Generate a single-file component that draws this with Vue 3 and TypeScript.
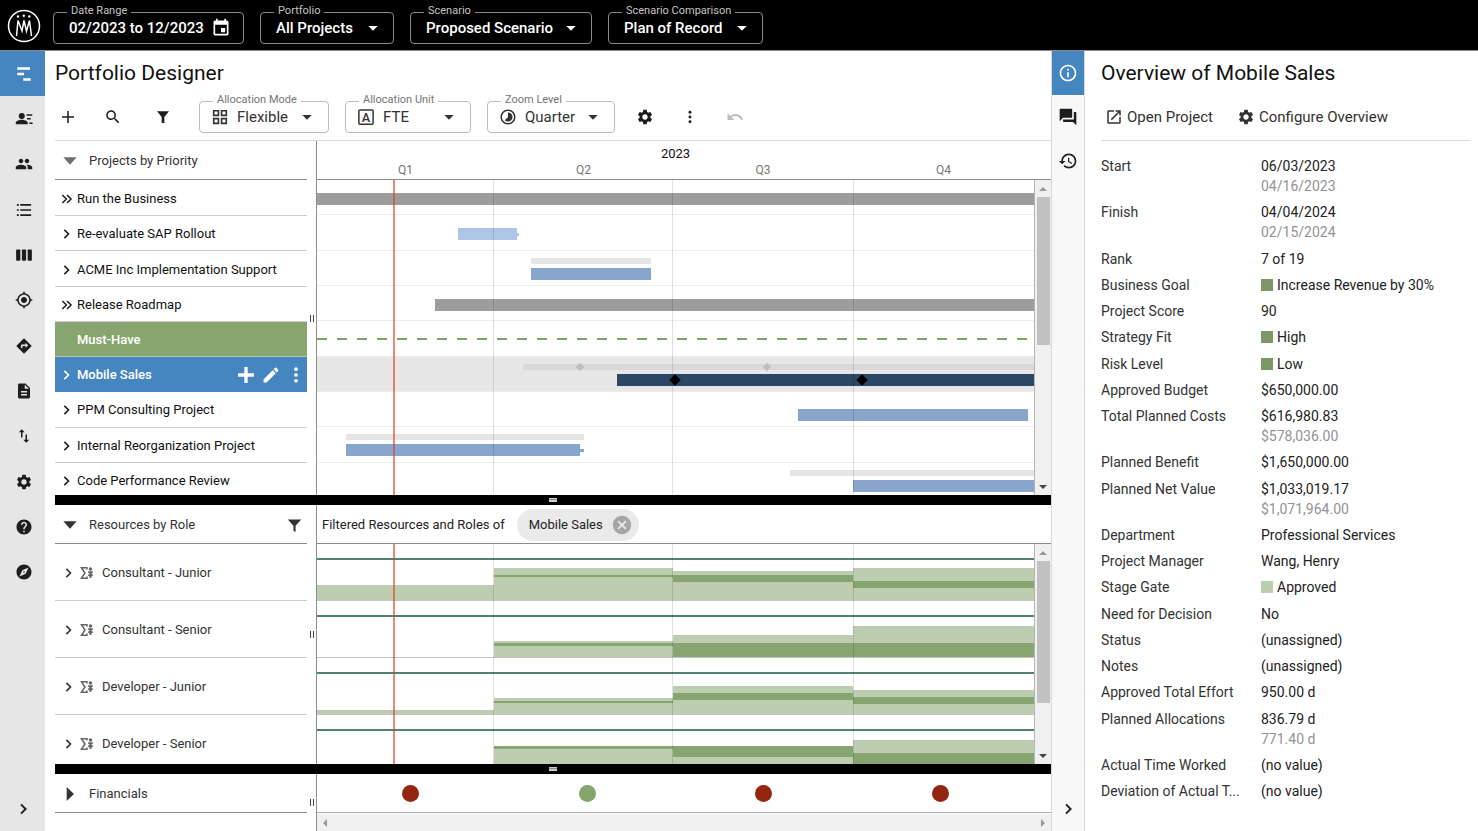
<script setup lang="ts">
import { h, ref, type FunctionalComponent } from 'vue'

const icons: Record<string, string> = {
  roadmap: '<path d="M3 3h17v3.200H3zM3 10.400h9v3.200H3zM11 17.800h10V21H11z"/>',
  person: '<circle cx="9" cy="8" r="4"/><path d="M1 19v-2c0-2.700 5.300-4 8-4s8 1.300 8 4v2zM15.500 5.500H23v2h-7.500zM16 10.500h5v2h-5zM19 16.500h4.500v2H19z"/>',
  people: '<path d="M16 11c1.660 0 2.990-1.340 2.990-3S17.660 5 16 5c-1.660 0-3 1.340-3 3s1.340 3 3 3zm-8 0c1.660 0 2.990-1.340 2.990-3S9.660 5 8 5C6.340 5 5 6.340 5 8s1.340 3 3 3zm0 2c-2.330 0-7 1.170-7 3.500V19h14v-2.500c0-2.330-4.670-3.500-7-3.500zm8 0c-.290 0-.620.020-.970.050 1.160.840 1.970 1.970 1.970 3.450V19h6v-2.500c0-2.330-4.670-3.500-7-3.500z"/>',
  list: '<path d="M2.500 4h2.600v2.200H2.500zM2.500 10.900h2.600v2.200H2.500zM2.500 17.800h2.600V20H2.500zM7 4h14.500v2.200H7zM7 10.900h14.500v2.200H7zM7 17.800h14.500V20H7z"/>',
  columns: '<rect x="1.500" y="4.500" width="5.600" height="15" rx="1.200"/><rect x="9.200" y="4.500" width="5.600" height="15" rx="1.200"/><rect x="16.900" y="4.500" width="5.600" height="15" rx="1.200"/>',
  target: '<path d="M12 8c-2.210 0-4 1.790-4 4s1.790 4 4 4 4-1.790 4-4-1.790-4-4-4zm8.940 3c-.460-4.170-3.770-7.480-7.940-7.940V1h-2v2.060C6.830 3.520 3.520 6.830 3.060 11H1v2h2.060c.460 4.170 3.770 7.480 7.940 7.940V23h2v-2.060c4.170-.460 7.480-3.770 7.940-7.940H23v-2h-2.060zM12 19c-3.870 0-7-3.130-7-7s3.130-7 7-7 7 3.130 7 7-3.130 7-7 7z"/>',
  directions: '<path d="M21.710 11.290l-9-9c-.390-.390-1.020-.390-1.410 0l-9 9c-.390.390-.390 1.020 0 1.410l9 9c.390.390 1.020.390 1.410 0l9-9c.390-.380.390-1.010 0-1.410zM14 14.500V12h-4v3H8v-4c0-.550.450-1 1-1h5V7.500l3.500 3.500-3.500 3.500z"/>',
  document: '<path d="M14 2H6c-1.100 0-1.990.900-1.990 2L4 20c0 1.100.890 2 1.990 2H18c1.100 0 2-.900 2-2V8l-6-6zm2 16H8v-2h8v2zm0-4H8v-2h8v2zm-3-5V3.500L18.500 9H13z"/>',
  swap: '<path d="M16 17.010V10h-2v7.010h-3L15 21l4-3.990h-3zM9 3L5 6.990h3V14h2V6.990h3L9 3z"/>',
  settings: '<path d="M19.140 12.940c.040-.300.060-.610.060-.940 0-.320-.020-.640-.070-.940l2.030-1.580c.180-.140.230-.410.120-.610l-1.920-3.320c-.120-.220-.370-.290-.590-.220l-2.390.960c-.500-.380-1.030-.700-1.620-.940l-.360-2.540c-.040-.240-.240-.410-.480-.410h-3.840c-.240 0-.430.170-.470.410l-.360 2.540c-.590.240-1.130.570-1.620.940l-2.390-.960c-.220-.080-.470 0-.590.220L2.740 8.870c-.120.210-.080.470.120.610l2.030 1.580c-.050.300-.090.630-.090.940s.020.640.070.940l-2.030 1.580c-.180.140-.230.410-.120.610l1.920 3.320c.120.220.370.290.590.220l2.390-.960c.500.380 1.030.700 1.620.940l.360 2.540c.050.240.240.410.480.410h3.840c.240 0 .440-.170.470-.410l.360-2.540c.590-.240 1.130-.560 1.620-.940l2.390.960c.220.080.470 0 .590-.220l1.920-3.320c.120-.220.070-.470-.120-.610l-2.010-1.580zM12 15.600c-1.980 0-3.600-1.620-3.600-3.600s1.620-3.600 3.600-3.600 3.600 1.620 3.600 3.600-1.620 3.600-3.600 3.600z"/>',
  help: '<path d="M12 2C6.480 2 2 6.480 2 12s4.480 10 10 10 10-4.480 10-10S17.520 2 12 2zm1 17h-2v-2h2v2zm2.070-7.750l-.900.920C13.450 12.900 13 13.500 13 15h-2v-.500c0-1.100.450-2.100 1.170-2.830l1.240-1.260c.370-.360.590-.860.590-1.410 0-1.100-.900-2-2-2s-2 .900-2 2H8c0-2.210 1.790-4 4-4s4 1.790 4 4c0 .880-.360 1.680-.930 2.250z"/>',
  explore: '<path d="M12 10.900c-.610 0-1.100.490-1.100 1.100s.490 1.100 1.100 1.100 1.100-.490 1.100-1.100-.490-1.100-1.100-1.100zM12 2C6.480 2 2 6.480 2 12s4.480 10 10 10 10-4.480 10-10S17.520 2 12 2zm2.190 12.190L6 18l3.810-8.190L18 6l-3.810 8.190z"/>',
  chevron: '<path d="M7.500 5L14.500 12l-7 7" fill="none" stroke="currentColor" stroke-width="2.800"/>',
  chevrons: '<path d="M4 5l7 7-7 7M12 5l7 7-7 7" fill="none" stroke="currentColor" stroke-width="2.500"/>',
  caret: '<path d="M5 9h14l-7 7z"/>',
  calendar: '<path d="M17 12h-5v5h5v-5zM16 1v2H8V1H6v2H5c-1.110 0-1.990.900-1.990 2L3 19c0 1.100.890 2 2 2h14c1.100 0 2-.900 2-2V5c0-1.100-.900-2-2-2h-1V1h-2zm3 18H5V8h14v11z"/>',
  plus: '<path d="M20 13h-7v7h-2v-7H4v-2h7V4h2v7h7z"/>',
  plusBold: '<path d="M21.500 14H14v7.500h-4V14H2.500v-4H10V2.500h4V10h7.500z"/>',
  search: '<path d="M15.500 14h-.790l-.280-.270C15.410 12.590 16 11.110 16 9.500 16 5.910 13.090 3 9.500 3S3 5.910 3 9.500 5.910 16 9.500 16c1.610 0 3.090-.590 4.230-1.570l.270.280v.790l5 4.990L20.490 19l-4.990-5zm-6 0C7.010 14 5 11.990 5 9.500S7.010 5 9.500 5 14 7.010 14 9.500 11.990 14 9.500 14z"/>',
  filter: '<path d="M3 3.500h18L14 12v9h-4v-9z"/>',
  filterThin: '<path d="M2.500 3.500h19L13.500 12.500V21l-3-1.500v-7z"/>',
  tiles: '<path d="M2.500 2.500h8.500V11H2.500zm2.200 2.200v4.100h4.100V4.700zM13 2.500h8.500V11H13zm2.200 2.200v4.100h4.100V4.700zM2.500 13h8.500v8.500H2.500zm2.200 2.200v4.100h4.100v-4.100zM13 13h8.500v8.500H13zm2.200 2.200v4.100h4.100v-4.100z" fill-rule="evenodd"/>',
  letter: '<rect x="2.500" y="2.500" width="19" height="19" rx="1.500" fill="none" stroke="currentColor" stroke-width="2"/><text x="12" y="18" text-anchor="middle" font-size="17" font-weight="500">A</text>',
  timelapse: '<path d="M16.240 7.760C15.070 6.590 13.540 6 12 6v6l-4.240 4.240c2.340 2.340 6.140 2.340 8.490 0 2.340-2.340 2.340-6.140-.010-8.480zM12 2C6.480 2 2 6.480 2 12s4.480 10 10 10 10-4.480 10-10S17.520 2 12 2zm0 18c-4.420 0-8-3.580-8-8s3.580-8 8-8 8 3.580 8 8-3.580 8-8 8z"/>',
  more: '<circle cx="12" cy="5" r="2.200"/><circle cx="12" cy="12" r="2.200"/><circle cx="12" cy="19" r="2.200"/>',
  undo: '<path d="M12.500 8c-2.650 0-5.050.990-6.900 2.600L2 7v9h9l-3.620-3.620c1.390-1.160 3.160-1.880 5.120-1.880 3.540 0 6.550 2.310 7.600 5.500l2.370-.780C21.080 11.030 17.150 8 12.500 8z"/>',
  edit: '<path d="M3 17.250V21h3.750L17.810 9.940l-3.750-3.750L3 17.250zM20.710 7.040c.390-.390.390-1.020 0-1.410l-2.340-2.340c-.390-.390-1.020-.390-1.410 0l-1.830 1.830 3.750 3.750 1.830-1.830z"/>',
  triangle: '<path d="M2 6.500h20L12 17.500z"/>',
  triangleRight: '<path d="M7 1.500L18 12 7 22.500z"/>',
  role: '<path d="M12 6V3H2.500l6 9-6 9H12v-3" fill="none" stroke="currentColor" stroke-width="2.600"/><circle cx="18" cy="5" r="3"/><path d="M14 9h8v3h-2v2h2v3h-2v3h-4v-3h-2v-3h2v-2h-2z"/>',
  cancel: '<path d="M12 2C6.470 2 2 6.470 2 12s4.470 10 10 10 10-4.470 10-10S17.530 2 12 2zm5 13.590L15.590 17 12 13.410 8.410 17 7 15.590 10.590 12 7 8.410 8.410 7 12 10.590 15.590 7 17 8.410 13.410 12 17 15.590z"/>',
  info: '<path d="M11 7h2v2h-2zm0 4h2v6h-2zm1-9C6.480 2 2 6.480 2 12s4.480 10 10 10 10-4.480 10-10S17.520 2 12 2zm0 18c-4.410 0-8-3.590-8-8s3.590-8 8-8 8 3.590 8 8-3.590 8-8 8z"/>',
  chat: '<path d="M21 6h-2v9H6v2c0 .550.450 1 1 1h11l4 4V7c0-.550-.450-1-1-1zm-4 6V3c0-.550-.450-1-1-1H3c-.550 0-1 .450-1 1v14l4-4h10c.550 0 1-.450 1-1z"/>',
  history: '<path d="M13 3c-4.970 0-9 4.030-9 9H1l3.890 3.890.070.140L9 12H6c0-3.870 3.130-7 7-7s7 3.130 7 7-3.130 7-7 7c-1.930 0-3.680-.790-4.940-2.060l-1.420 1.420C8.270 19.990 10.510 21 13 21c4.970 0 9-4.030 9-9s-4.030-9-9-9zm-1 5v5l4.280 2.540.720-1.210-3.500-2.080V8H12z"/>',
  open: '<path d="M14 3v2h3.590l-9.830 9.830 1.410 1.410L19 6.410V10h2V3zm5 16H5V5h7V3H5c-1.110 0-2 .900-2 2v14a2 2 0 0 0 2 2h14a2 2 0 0 0 2-2v-7h-2v7z"/>',
}

const Icon: FunctionalComponent<{ name: string; size?: number }> = (p) =>
  h('svg', {
    viewBox: '0 0 24 24',
    width: p.size ?? 18,
    height: p.size ?? 18,
    fill: 'currentColor',
    'aria-hidden': 'true',
    innerHTML: icons[p.name],
  })
Icon.props = ['name', 'size']

const headerFields = [
  { id: 'portfolio', label: 'Portfolio', value: 'All Projects', cls: 'w-portfolio' },
  { id: 'scenario', label: 'Scenario', value: 'Proposed Scenario', cls: 'w-scenario' },
  { id: 'comparison', label: 'Scenario Comparison', value: 'Plan of Record', cls: 'w-comparison' },
]
const toolFields = [
  { id: 'mode', label: 'Allocation Mode', value: 'Flexible', icon: 'tiles', cls: 'w-mode' },
  { id: 'unit', label: 'Allocation Unit', value: 'FTE', icon: 'letter', cls: 'w-unit' },
  { id: 'zoom', label: 'Zoom Level', value: 'Quarter', icon: 'timelapse', cls: 'w-zoom' },
]
const nav = [
  ['roadmap', 'Portfolio Designer'], ['person', 'Resource details'], ['people', 'Teams'],
  ['list', 'List'], ['columns', 'Board'], ['target', 'Goals'], ['directions', 'Decisions'],
  ['document', 'Reports'], ['swap', 'Import and export'], ['settings', 'Settings'],
  ['help', 'Help'], ['explore', 'Explore'],
]

/* Timeline positions are expressed in units of the visible span. */
const SPAN = 717
const pct = (v: number) => `${(v / SPAN) * 100}%`
const span = (r: number[]) => ({ marginLeft: pct(r[0]), width: pct(r[1] - r[0]) })
const at = (v: number) => ({ left: pct(v) })
const quarterStarts = [176, 355, 536]
const today = 76

interface Row {
  name: string
  kind: 'group' | 'project' | 'divider' | 'selected'
  tone?: string
  bar?: number[]
  tail?: number
  base?: number[]
  single?: boolean
  marks?: number[]
  baseMarks?: number[]
}
const projects: Row[] = [
  { name: 'Run the Business', kind: 'group', tone: 'gray', bar: [0, 717], single: true },
  { name: 'Re-evaluate SAP Rollout', kind: 'project', tone: 'light', bar: [141, 200], tail: 2, single: true },
  { name: 'ACME Inc Implementation Support', kind: 'project', tone: 'blue', bar: [214, 334], base: [214, 334] },
  { name: 'Release Roadmap', kind: 'group', tone: 'gray', bar: [118, 717], single: true },
  { name: 'Must-Have', kind: 'divider' },
  { name: 'Mobile Sales', kind: 'selected', tone: 'navy', bar: [300, 717], base: [206, 717], marks: [357, 544], baseMarks: [263, 450] },
  { name: 'PPM Consulting Project', kind: 'project', tone: 'blue', bar: [481, 711] },
  { name: 'Internal Reorganization Project', kind: 'project', tone: 'blue', bar: [29, 263], tail: 4, base: [29, 267] },
  { name: 'Code Performance Review', kind: 'project', tone: 'blue', bar: [536, 717], base: [473, 717] },
]

/* Each quarter stacks free (top), allocated (middle) and used (bottom) heights. */
const roles = [
  { name: 'Consultant - Junior', load: [[0, 0, 15], [7, 2, 23], [4, 7, 18], [13, 7, 12]] },
  { name: 'Consultant - Senior', load: [[0, 0, 0], [2, 3, 11], [8, 14, 0], [17, 14, 0]] },
  { name: 'Developer - Junior', load: [[0, 0, 4], [3, 2, 11], [7, 7, 14], [7, 7, 10]] },
  { name: 'Developer - Senior', load: [[0, 0, 0], [0, 3, 22], [0, 11, 14], [13, 18, 0]] },
]
const px = (v: number) => ({ height: `${v}px` })
const finance = ['red', 'green', 'red', 'red']

const facts: { k: string; v: string; old?: string; chip?: string }[] = [
  { k: 'Start', v: '06/03/2023', old: '04/16/2023' },
  { k: 'Finish', v: '04/04/2024', old: '02/15/2024' },
  { k: 'Rank', v: '7 of 19' },
  { k: 'Business Goal', v: 'Increase Revenue by 30%', chip: 'dark' },
  { k: 'Project Score', v: '90' },
  { k: 'Strategy Fit', v: 'High', chip: 'dark' },
  { k: 'Risk Level', v: 'Low', chip: 'dark' },
  { k: 'Approved Budget', v: '$650,000.00' },
  { k: 'Total Planned Costs', v: '$616,980.83', old: '$578,036.00' },
  { k: 'Planned Benefit', v: '$1,650,000.00' },
  { k: 'Planned Net Value', v: '$1,033,019.17', old: '$1,071,964.00' },
  { k: 'Department', v: 'Professional Services' },
  { k: 'Project Manager', v: 'Wang, Henry' },
  { k: 'Stage Gate', v: 'Approved', chip: 'soft' },
  { k: 'Need for Decision', v: 'No' },
  { k: 'Status', v: '(unassigned)' },
  { k: 'Notes', v: '(unassigned)' },
  { k: 'Approved Total Effort', v: '950.00 d' },
  { k: 'Planned Allocations', v: '836.79 d', old: '771.40 d' },
  { k: 'Actual Time Worked', v: '(no value)' },
  { k: 'Deviation of Actual T...', v: '(no value)' },
]
const chosen = ref<Record<string, string>>(
  Object.fromEntries([...headerFields, ...toolFields].map((f) => [f.id, f.value])),
)
</script>

<template>
  <div class="app">
    <header class="topbar">
      <svg class="logo" viewBox="0 0 34 34" width="34" height="34" fill="none" stroke="#fff" aria-label="Meisterplan">
        <circle cx="17" cy="17" r="15.500" stroke-width="1.500" />
        <path d="M9.500 27l1.500-15.500 4 10.500L17 11.500 19.500 22 22.500 11.500 24.500 27" stroke-width="1.500" />
        <g fill="#fff" stroke="none">
          <circle cx="11" cy="7.500" r="1.200" /><circle cx="16.800" cy="6.800" r="1.200" /><circle cx="22.300" cy="7.500" r="1.200" />
        </g>
      </svg>
      <div class="field dark w-date">
        <span id="date-label" class="caption">Date Range</span>
        <button type="button" class="date" aria-labelledby="date-label">
          <span>02/2023 to 12/2023</span><Icon name="calendar" :size="20" />
        </button>
      </div>
      <div v-for="f in headerFields" :key="f.id" class="field dark" :class="f.cls">
        <label class="caption" :for="f.id">{{ f.label }}</label>
        <select :id="f.id" v-model="chosen[f.id]"><option>{{ f.value }}</option></select>
        <Icon name="caret" :size="16" />
      </div>
    </header>

    <div class="body">
      <nav class="rail" aria-label="Main">
        <div class="rail-list">
          <button v-for="(n, i) in nav" :key="n[1]" type="button" :class="{ active: i === 0 }" :aria-label="n[1]">
            <Icon :name="n[0]" :size="18" />
          </button>
        </div>
        <button type="button" class="expand" aria-label="Expand navigation"><Icon name="chevron" :size="16" /></button>
      </nav>

      <main>
        <div class="head">
          <h1>Portfolio Designer</h1>
          <div class="tools">
            <button type="button" class="tool add" aria-label="Add"><Icon name="plus" /></button>
            <button type="button" class="tool find" aria-label="Search"><Icon name="search" /></button>
            <button type="button" class="tool" aria-label="Filter"><Icon name="filter" :size="16" /></button>
            <div class="tool-fields">
              <div v-for="f in toolFields" :key="f.id" class="field" :class="f.cls">
                <label class="caption" :for="f.id">{{ f.label }}</label>
                <Icon :name="f.icon" :size="18" />
                <select :id="f.id" v-model="chosen[f.id]"><option>{{ f.value }}</option></select>
                <Icon name="caret" :size="16" />
              </div>
            </div>
            <button type="button" class="tool" aria-label="Settings"><Icon name="settings" /></button>
            <button type="button" class="tool" aria-label="More"><Icon name="more" :size="16" /></button>
            <button type="button" class="tool" aria-label="Undo" disabled><Icon name="undo" /></button>
          </div>
        </div>

        <section class="pane projects">
          <div class="left">
            <div class="bar-head faded"><button type="button" aria-label="Collapse projects"><Icon name="triangle" :size="16" /></button><span>Projects by Priority</span></div>
            <div class="clip">
              <ul class="rows nine">
                <li v-for="p in projects" :key="p.name" :class="p.kind">
                  <button v-if="p.kind !== 'divider'" type="button" class="twist" :aria-label="'Expand ' + p.name">
                    <Icon :name="p.kind === 'group' ? 'chevrons' : 'chevron'" :size="14" />
                  </button>
                  <span v-else class="twist"></span>
                  <span class="name">{{ p.name }}</span>
                  <span v-if="p.kind === 'selected'" class="actions">
                    <button type="button" aria-label="Add"><Icon name="plusBold" :size="20" /></button>
                    <button type="button" aria-label="Edit"><Icon name="edit" :size="20" /></button>
                    <button type="button" aria-label="More"><Icon name="more" :size="20" /></button>
                  </span>
                </li>
              </ul>
            </div>
          </div>
          <div class="gutter"><i></i></div>
          <div class="right">
            <div class="time-head">
              <div class="year">2023</div>
              <div class="quarters"><span v-for="q in 4" :key="q">Q{{ q }}</span></div>
            </div>
            <div class="view">
              <div class="chart">
                <div class="rows nine">
                  <div v-for="p in projects" :key="p.name" class="lane" :class="[p.kind, { single: p.single }]">
                    <div v-if="p.kind === 'divider'" class="dash"></div>
                    <template v-else>
                      <div v-if="!p.single" class="slot">
                        <div v-if="p.base" class="base" :style="span(p.base)"></div>
                        <i v-for="m in p.baseMarks" :key="m" class="mark soft" :style="at(m)"></i>
                      </div>
                      <div class="track">
                        <div v-if="p.bar" class="task" :class="p.tone" :style="span(p.bar)"></div>
                        <div v-if="p.tail" class="tail" :class="p.tone" :style="{ width: pct(p.tail) }"></div>
                        <i v-for="m in p.marks" :key="m" class="mark" :style="at(m)"></i>
                      </div>
                    </template>
                  </div>
                </div>
                <i v-for="q in quarterStarts" :key="q" class="qline" :style="at(q)"></i>
                <i class="now" :style="at(today)"></i>
              </div>
              <div class="scroll"><i class="up"></i><b class="thumb"></b><i class="down"></i></div>
            </div>
          </div>
        </section>

        <div class="split"><i></i></div>

        <section class="pane resources">
          <div class="left">
            <div class="bar-head">
              <button type="button" aria-label="Collapse resources"><Icon name="triangle" :size="16" /></button><span>Resources by Role</span>
              <button type="button" class="end" aria-label="Filter resources"><Icon name="filterThin" :size="17" /></button>
            </div>
            <div class="clip">
              <ul class="rows roles">
                <li v-for="r in roles" :key="r.name">
                  <button type="button" class="twist" :aria-label="'Expand ' + r.name"><Icon name="chevron" :size="14" /></button>
                  <Icon name="role" :size="14" class="role" />
                  <span class="name">{{ r.name }}</span>
                </li>
              </ul>
            </div>
          </div>
          <div class="gutter"><i></i></div>
          <div class="right">
            <div class="filter-head">
              <span>Filtered Resources and Roles of</span>
              <span class="pill">Mobile Sales<button type="button" aria-label="Remove filter"><Icon name="cancel" :size="22" /></button></span>
            </div>
            <div class="view">
              <div class="chart">
                <i v-for="q in quarterStarts" :key="q" class="qline" :style="at(q)"></i>
                <div class="rows roles">
                  <div v-for="r in roles" :key="r.name" class="load">
                    <div v-for="(l, i) in r.load" :key="i" class="stack">
                      <div class="pale" :style="px(l[0])"></div>
                      <div class="deep" :style="px(l[1])"></div>
                      <div class="pale" :style="px(l[2])"></div>
                    </div>
                  </div>
                </div>
                <i class="now" :style="at(today)"></i>
              </div>
              <div class="scroll"><i class="up"></i><b class="thumb"></b><i class="down"></i></div>
            </div>
          </div>
        </section>

        <div class="split"><i></i></div>

        <section class="pane financials">
          <div class="left">
            <div class="bar-head"><button type="button" aria-label="Expand financials"><Icon name="triangleRight" :size="16" /></button><span>Financials</span></div>
          </div>
          <div class="gutter"><i></i></div>
          <div class="right">
            <div class="dots"><span v-for="(c, i) in finance" :key="i"><i :class="c"></i></span></div>
            <div class="hscroll"><i class="prev"></i><i class="next"></i></div>
          </div>
        </section>
      </main>

      <aside class="side-rail">
        <button type="button" class="active" aria-label="Overview"><Icon name="info" :size="20" /></button>
        <button type="button" aria-label="Comments"><Icon name="chat" :size="20" /></button>
        <button type="button" aria-label="History"><Icon name="history" :size="20" /></button>
        <button type="button" class="expand" aria-label="Collapse panel"><Icon name="chevron" :size="16" /></button>
      </aside>

      <section class="overview">
        <h2>Overview of Mobile Sales</h2>
        <div class="links">
          <button type="button"><Icon name="open" />Open Project</button>
          <button type="button"><Icon name="settings" />Configure Overview</button>
        </div>
        <dl>
          <div v-for="f in facts" :key="f.k" class="fact">
            <dt>{{ f.k }}</dt>
            <dd>
              <div><i v-if="f.chip" class="chip" :class="f.chip"></i>{{ f.v }}</div>
              <div v-if="f.old" class="old">{{ f.old }}</div>
            </dd>
          </div>
        </dl>
      </section>
    </div>
  </div>
</template>

<style>
html, body, #app { height: 100%; margin: 0; }
body { overflow: hidden; }
</style>

<style scoped>
.app { display: flex; flex-direction: column; height: 100vh; font: 14px/20px Roboto, "Liberation Sans", sans-serif; color: #1d1d1d; background: #fff; }
.app * { box-sizing: border-box; }
button, select { font: inherit; color: inherit; background: none; border: 0; padding: 0; margin: 0; }
button { cursor: pointer; display: inline-flex; align-items: center; justify-content: center; }
select { appearance: none; flex: 1; min-width: 0; outline: 0; }
ul, dl, dd { margin: 0; padding: 0; list-style: none; }
svg { flex: none; display: block; }

.topbar { flex: none; height: 51px; border-bottom: 1px solid #8c8c8c; background: #000; color: #fff; display: flex; align-items: flex-start; gap: 16px; padding: 12px 7px 0; }
.logo { margin: -3px -4px 0 0; }
.field { position: relative; height: 32px; display: flex; align-items: center; border: 1px solid #bdbdbd; border-radius: 4px; padding: 0 13px 0 11px; gap: 8px; color: #333; font-size: 15px; }
.field.dark { border-color: #8a8a8a; color: #fff; padding: 0 12px 0 15px; gap: 0; font-weight: 500; }
.field.dark select { background: #000; }
.caption { position: absolute; left: 13px; top: -10px; padding: 0 4px; font-size: 11px; line-height: 16px; font-weight: 400; color: #757575; background: #fff; white-space: nowrap; }
.dark .caption { color: #c4c4c4; background: #000; }
.date { flex: 1; justify-content: space-between; font-weight: 500; }
.w-date { width: 191px; }
.w-portfolio { width: 134px; }
.w-scenario { width: 182px; }
.w-comparison { width: 155px; }
.w-mode { width: 130px; }
.w-unit { width: 126px; }
.w-zoom { width: 128px; }

.body { flex: 1; display: flex; min-height: 0; }
.rail { flex: none; width: 45px; background: #e6e6e6; display: flex; flex-direction: column; justify-content: space-between; }
.rail-list { display: grid; grid-auto-rows: 1fr; height: 544px; }
.rail button { padding-left: 3px; }
.rail .active, .side-rail .active { background: #4686c0; color: #fff; }
.rail .expand, .side-rail .expand { height: 44px; }

main { flex: 1; min-width: 0; display: flex; flex-direction: column; padding-left: 10px; }
.head { flex: none; height: 90px; border-bottom: 1px solid #dcdcdc; }
h1, h2 { margin: 0; padding-top: 10px; font-size: 21px; line-height: 24px; font-weight: 400; color: #111; }
.tools { display: flex; align-items: center; height: 32px; margin-top: 16px; }
.tool { width: 45px; height: 32px; }
.tool.add { width: 26px; margin-right: 9px; }
.tool.find { margin-right: 5px; }
.tool:disabled { color: #bdbdbd; }
.tool-fields { display: flex; gap: 16px; padding: 0 7px 0 14px; }

.pane { display: grid; grid-template-columns: 252px 10px minmax(0, 1fr); min-height: 0; }
.projects { flex: 354 1 0; }
.resources { flex: 259 1 0; }
.financials { flex: none; height: 57px; }
.left, .right { display: flex; flex-direction: column; min-height: 0; min-width: 0; }
.gutter { border-right: 1px solid #8c8c8c; display: flex; align-items: center; justify-content: center; }
.gutter i { width: 4px; height: 7px; border: solid #444; border-width: 0 1px; }
.bar-head { flex: none; height: 39px; border-bottom: 1px solid #8c8c8c; display: flex; align-items: center; gap: 11px; padding: 2px 4px 0 7px; font-size: 13px; color: #333; }
.bar-head .end { margin-left: auto; }
.faded svg { color: #6f6f6f; }
.clip { flex: 1; min-height: 0; overflow: hidden; }
.projects .clip { padding-top: 1px; }
.rows { display: grid; }
.nine { grid-template-rows: repeat(9, minmax(0, 1fr)); height: calc(100% + 3px); }
.roles { grid-auto-rows: 57px; }
li { display: flex; align-items: center; border-bottom: 1px solid #ccc; padding: 2px 0 0 5px; font-size: 13px; }
.nine .name { color: #111; }
.twist { width: 14px; height: 20px; margin-right: 3px; }
li.divider { background: #87a66f; border-color: #b4c7a5; font-weight: 500; }
li.selected { background: #4686c0; border-color: #4686c0; color: #fff; font-weight: 500; }
.divider .name, .selected .name { color: #fff; }
.actions { margin-left: auto; display: flex; gap: 5px; padding-right: 1px; }
.roles li { padding-left: 7px; color: #333; }
.role { color: #666; margin: 0 8px 0 1px; }

.time-head { flex: none; height: 39px; border-bottom: 1px solid #8c8c8c; padding-right: 17px; line-height: 16px; font-size: 13px; }
.year { text-align: center; padding-top: 5px; color: #111; }
.quarters { display: grid; grid-template-columns: 177fr 179fr 180fr 181fr; text-align: center; font-size: 12px; color: #757575; }
.view { flex: 1; min-height: 0; display: flex; }
.chart { flex: 1; min-width: 0; position: relative; overflow: hidden; }
.qline { position: absolute; top: 0; bottom: 0; width: 1px; background: rgba(0, 0, 0, .12); }
.now { position: absolute; top: 0; bottom: 0; width: 2px; background: rgba(220, 60, 40, .6); }
.lane { border-bottom: 1px solid #ededed; padding-top: 7px; display: flex; flex-direction: column; gap: 4px; }
.lane.single { padding-top: 13px; }
.lane.selected { background: #e7e7e7; }
.slot { position: relative; height: 6px; }
.base { height: 6px; background: #e5e5e5; }
.selected .base { background: #d9d9d9; }
.track { position: relative; height: 12px; display: flex; align-items: center; }
.task { height: 12px; }
.tail { height: 3px; }
.gray { background: #9d9d9d; }
.light { background: #aec6e5; }
.blue { background: #88a5cb; }
.navy { background: #2c4666; }
.mark { position: absolute; top: 50%; width: 8px; height: 8px; margin: -4px 0 0 -3px; background: #000; transform: rotate(45deg); }
.mark.soft { width: 6px; height: 6px; margin: -3px 0 0 -3px; background: #bfbfbf; }
.dash { height: 2px; margin-top: 10px; background: repeating-linear-gradient(90deg, #7fa366 0 10px, transparent 10px 20px); }

.scroll { flex: none; width: 17px; background: #f0f0f0; border-left: 1px solid #b5b5b5; display: flex; flex-direction: column; align-items: center; padding: 7px 0 6px; }
.scroll i { border: solid transparent; border-width: 0 4px; }
.scroll .up { border-bottom: 4px solid #999; margin-bottom: 6px; }
.scroll .down { border-top: 4px solid #444; margin-top: auto; }
.thumb { width: 13px; }
.projects .thumb { height: 148px; }
.resources .thumb { height: 142px; }
.thumb { background: #c1c1c1; }

.split { flex: none; height: 10px; background: #000; display: flex; align-items: center; justify-content: center; }
.split i { width: 8px; height: 4px; border: solid #ccc; border-width: 1px 0 2px; background: #888; }

.filter-head { flex: none; height: 39px; border-bottom: 1px solid #8c8c8c; display: flex; align-items: center; gap: 12px; padding: 1px 0 0 5px; font-size: 13px; color: #222; }
.pill { display: flex; align-items: center; gap: 8px; height: 32px; border-radius: 16px; background: #eaeaea; padding: 0 6px 0 12px; }
.pill svg { color: #a6a6a6; }
.load { display: grid; grid-template-columns: 177fr 179fr 180fr 181fr; align-items: end; border-bottom: 1px solid #c4c4c4; background: linear-gradient(#4f8270, #4f8270) 0 14px / 100% 2px no-repeat; }
.stack { display: flex; flex-direction: column; }
.pale { background: #bccdb0; }
.deep { background: #86a570; }

.dots { flex: none; height: 39px; border-bottom: 1px solid #aaa; display: grid; grid-template-columns: repeat(4, 1fr); place-items: center; padding: 1px 22px 0 5px; }
.dots i { display: block; width: 17px; height: 17px; border-radius: 50%; }
.red { background: #94260f; }
.green { background: #84a56c; }
.hscroll { flex: 1; margin-top: 1px; background: #f0f0f0; display: flex; justify-content: space-between; align-items: center; padding: 0 6px; }
.hscroll i { border: solid transparent; border-width: 4px 0; }
.hscroll .prev { border-right: 4px solid #999; }
.hscroll .next { border-left: 4px solid #999; }

.side-rail { flex: none; width: 34px; background: #f8f8f8; border: solid #d8d8d8; border-width: 0 1px; display: flex; flex-direction: column; }
.side-rail button { height: 44px; }
.side-rail .expand { margin-top: auto; padding-left: 2px; }

.overview { flex: none; width: 393px; display: flex; flex-direction: column; padding: 0 8px 30px 16px; color: #333; }
.links { display: flex; gap: 24px; height: 56px; padding: 8px 0 0 4px; margin: 0 0 15px; border-bottom: 1px solid #dcdcdc; align-items: center; }
.links button { gap: 4px; font-size: 15px; }
dl { flex: 1; display: flex; flex-direction: column; justify-content: space-between; }
.fact { display: grid; grid-template-columns: 160px 1fr; }
dd div { display: flex; align-items: center; gap: 4px; }
dd { color: #222; }
dd .old { color: #939393; }
.chip { width: 12px; height: 12px; }
.chip.dark { background: #7e9766; }
.chip.soft { background: #bccdb0; }
</style>
